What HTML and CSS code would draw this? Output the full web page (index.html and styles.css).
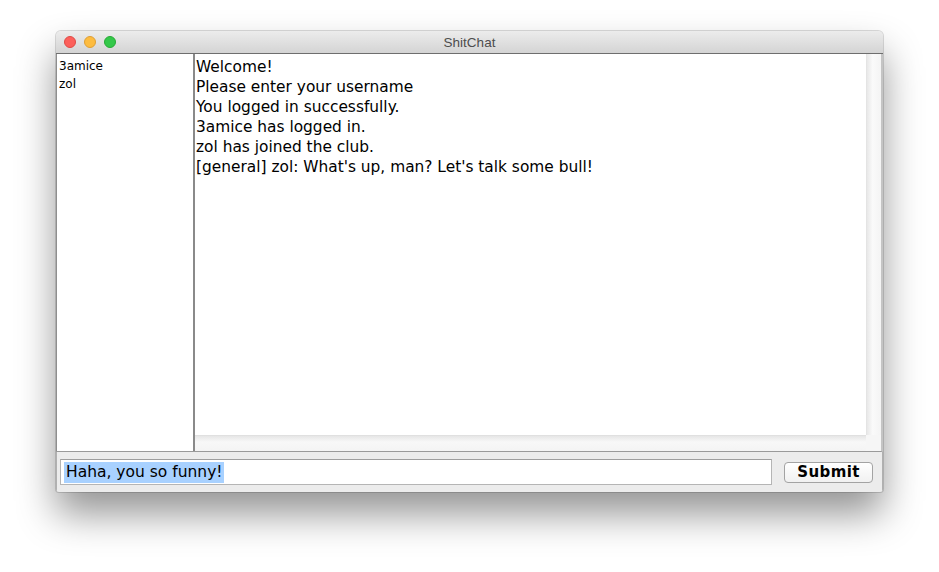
FILE: index.html
```html
<!DOCTYPE html>
<html>
<head>
<meta charset="utf-8">
<link rel="stylesheet" href="styles.css">
</head>
<body>
<div class="window">
  <div class="titlebar">
    <div class="lights">
      <span class="light red"></span>
      <span class="light yellow"></span>
      <span class="light green"></span>
    </div>
    <div class="title">ShitChat</div>
  </div>
  <div class="main">
    <div class="users">
      <div>3amice</div>
      <div>zol</div>
    </div>
    <div class="chat">
      <div class="chat-row">
        <div class="messages">
          <div>Welcome!</div>
          <div>Please enter your username</div>
          <div>You logged in successfully.</div>
          <div>3amice has logged in.</div>
          <div>zol has joined the club.</div>
          <div>[general] zol: What's up, man? Let's talk some bull!</div>
        </div>
        <div class="vscroll"></div>
      </div>
      <div class="hscroll"></div>
    </div>
  </div>
  <div class="bottom">
    <div class="input"><span class="sel">Haha, you so funny!</span></div>
    <div class="button">Submit</div>
  </div>
</div>
</body>
</html>
```
FILE: styles.css
```css
html {
  min-height: 100%;
  background: #ffffff;
}
html, body {
  margin: 0;
  padding: 0;
}
body {
  min-height: 572px;
  box-sizing: border-box;
  padding: 31px 0 0 56px;
  font-family: "DejaVu Sans", "Lucida Grande", sans-serif;
}
.window {
  width: 827px;
  height: 461px;
  display: flex;
  flex-direction: column;
  border-radius: 5px 5px 3px 3px;
  box-shadow: 0 22px 38px rgba(0,0,0,0.42), 0 0 0 1px rgba(0,0,0,0.14);
  background: #ececec;
  overflow: hidden;
}
.titlebar {
  height: 22px;
  background: linear-gradient(#ececec, #d4d4d4);
  border-bottom: 1px solid #6e6e6e;
  display: flex;
  align-items: center;
  position: relative;
}
.lights {
  display: flex;
  gap: 8px;
  padding-left: 8px;
}
.light {
  width: 12px;
  height: 12px;
  border-radius: 50%;
  box-sizing: border-box;
}
.red { background: #fc605b; border: 1px solid #de4a45; }
.yellow { background: #fdbc40; border: 1px solid #de9f34; }
.green { background: #34c84a; border: 1px solid #27aa35; }
.title {
  position: absolute;
  left: 0;
  right: 0;
  text-align: center;
  font-family: "Liberation Sans", "Helvetica Neue", sans-serif;
  font-size: 13.5px;
  color: #4d4d4d;
  top: 4px;
}
.main {
  height: 397px;
  display: flex;
  border-bottom: 1px solid #9a9a9a;
  border-right: 2px solid #c4c4c4;
}
.users {
  width: 139px;
  box-sizing: border-box;
  background: #fff;
  border-left: 1px solid #8e8e8e;
  border-right: 2px solid #8a8a8a;
  font-size: 12px;
  line-height: 18px;
  padding: 3px 0 0 2px;
  color: #000;
}
.chat {
  flex: 1;
  display: flex;
  flex-direction: column;
  background: #f6f6f6;
}
.chat-row {
  flex: 1;
  display: flex;
}
.messages {
  flex: 1;
  background: #fff;
  font-size: 15.4px;
  line-height: 20px;
  padding: 3px 0 0 1px;
  color: #000;
}
.vscroll {
  width: 14px;
  background: linear-gradient(to right, #e8e8e8, #fafafa 40%, #f4f4f4);
  border-left: 1px solid #e4e4e4;
}
.hscroll {
  height: 15px;
  background: linear-gradient(#e6e6e6, #f8f8f8 40%, #f4f4f4);
  margin-right: 15px;
  border-top: 1px solid #e0e0e0;
}
.bottom {
  flex: 1;
  display: flex;
  align-items: center;
  padding: 0 9px 0 3px;
  gap: 12px;
  border-left: 1px solid #b0b0b0;
  border-right: 1px solid #b0b0b0;
}
.input {
  flex: 1;
  height: 26px;
  box-sizing: border-box;
  background: #fff;
  border: 1px solid #b5b5b5;
  border-top-color: #9e9e9e;
  display: flex;
  align-items: center;
  padding-left: 3px;
  font-size: 15.5px;
}
.sel {
  background: #a8d1ff;
  padding: 0 1px 0 2px;
  line-height: 21px;
}
.button {
  width: 89px;
  height: 21px;
  box-sizing: border-box;
  border: 1px solid #a3a3a3;
  border-radius: 4px;
  background: linear-gradient(#ffffff, #f1f1f1);
  font-weight: bold;
  font-size: 15px;
  display: flex;
  align-items: center;
  justify-content: center;
  letter-spacing: 0.4px;
}
```
